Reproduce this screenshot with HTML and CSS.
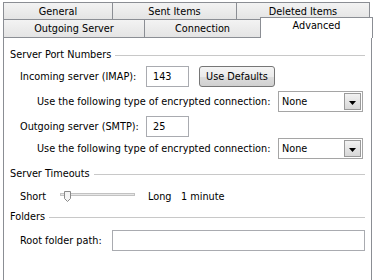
FILE: index.html
```html
<!DOCTYPE html>
<html>
<head>
<meta charset="utf-8">
<link rel="stylesheet" href="styles.css">
</head>
<body>
<div class="dialog">
  <div class="tabs">
    <div class="tabrow row1">
      <div class="tab t-general">General</div>
      <div class="tab t-sent">Sent Items</div>
      <div class="tab t-deleted last">Deleted Items</div>
    </div>
    <div class="tabrow row2">
      <div class="tab t-outgoing">Outgoing Server</div>
      <div class="tab t-connection">Connection</div>
      <div class="tab t-advanced selected">Advanced</div>
    </div>
  </div>
  <div class="panel">
    <div class="legend g1"><span>Server Port Numbers</span></div>
    <div class="row r-in">
      <span class="lbl lbl-port">Incoming server (IMAP):</span>
      <div class="textbox port">143</div>
      <div class="button">Use Defaults</div>
    </div>
    <div class="row r-enc1 indent">
      <span class="lbl lbl-enc">Use the following type of encrypted connection:</span>
      <div class="select"><span>None</span><span class="arrow"><svg width="7" height="4" viewBox="0 0 7 4"><path d="M0 0H7L3.5 4Z" fill="#000"/></svg></span></div>
    </div>
    <div class="row r-out">
      <span class="lbl lbl-port">Outgoing server (SMTP):</span>
      <div class="textbox port">25</div>
    </div>
    <div class="row r-enc2 indent">
      <span class="lbl lbl-enc">Use the following type of encrypted connection:</span>
      <div class="select"><span>None</span><span class="arrow"><svg width="7" height="4" viewBox="0 0 7 4"><path d="M0 0H7L3.5 4Z" fill="#000"/></svg></span></div>
    </div>
    <div class="legend g2"><span>Server Timeouts</span></div>
    <div class="row r-slider">
      <span class="lbl lbl-short">Short</span>
      <svg class="slider" width="76" height="12" viewBox="0 0 76 12">
        <rect x="0.5" y="2.5" width="74" height="2" fill="#e7e7e7" stroke="#c2c2c2"/>
        <path d="M4.5 0.5H10.5V7.5L7.5 10.5L4.5 7.5Z" fill="#f4f4f4" stroke="#8a8a8a"/>
      </svg>
      <span class="lbl lbl-long">Long</span>
      <span class="lbl">1 minute</span>
    </div>
    <div class="legend g3"><span>Folders</span></div>
    <div class="row r-root">
      <span class="lbl lbl-root">Root folder path:</span>
      <div class="textbox root"></div>
    </div>
  </div>
</div>
</body>
</html>
```

FILE: styles.css
```css
* { box-sizing: border-box; }
html, body { margin: 0; padding: 0; background: #fff; }
body {
  font-family: "DejaVu Sans Condensed", "Liberation Sans", sans-serif;
  font-size: 10.8px;
  color: #000;
  width: 374px;
  height: 280px;
  overflow: hidden;
}
.dialog { width: 374px; }
.tabs { padding: 2px 0 0 3px; }
.tabrow { display: flex; align-items: flex-start; }
.row1 { height: 17px; }
.row2 { height: 18px; }
.tab {
  border: 1px solid #8b8e94;
  border-right: none;
  border-bottom: none;
  background: linear-gradient(#f3f3f3, #e4e4e4);
  text-align: center;
  line-height: 17px;
  white-space: nowrap;
}
.row1 .tab { height: 17px; }
.row2 .tab { height: 18px; line-height: 17px; }
.tab.last { border-right: 1px solid #8b8e94; }
.t-general { width: 109px; }
.t-sent { width: 124px; }
.t-deleted { width: 134px; }
.t-outgoing { width: 141px; }
.t-connection { width: 116px; }
.row2 .t-advanced {
  width: 113px;
  height: 21px;
  margin-top: -2px;
  line-height: 16px;
  background: #fff;
  border-right: 1px solid #8b8e94;
  position: relative;
  z-index: 1;
}
.panel {
  margin-left: 3px;
  width: 369px;
  height: 243px;
  border: 1px solid #8b8e94;
  border-bottom: none;
  background: #fff;
  padding: 0 6px 0 6px;
}
.legend {
  display: flex;
  align-items: center;
  height: 14px;
  line-height: 14px;
}
.legend::after {
  content: "";
  flex: 1;
  height: 1px;
  background: #c8c8c8;
  margin-left: 4px;
}
.g1 { margin-top: 10px; }
.g2 { margin-top: 8px; }
.g3 { margin-top: 6px; }
.row {
  display: flex;
  align-items: center;
  padding-left: 10px;
}
.row.indent { padding-left: 27px; }
.lbl { white-space: nowrap; }
.r-in { margin-top: 4px; height: 21px; }
.r-enc1 { margin-top: 4px; height: 21px; }
.r-out { margin-top: 4px; height: 21px; }
.r-enc2 { margin-top: 1px; height: 21px; }
.r-slider { margin-top: 7px; height: 16px; }
.r-root { margin-top: 6px; height: 21px; }
.lbl-port { width: 126px; }
.lbl-enc { width: 241px; }
.lbl-root { width: 92px; }
.lbl-short { width: 40px; }
.lbl-long { margin-left: 12px; width: 33px; }
.textbox {
  border: 1px solid #a9abb0;
  background: #fff;
  height: 21px;
  line-height: 19px;
  padding-left: 6px;
}
.textbox.port { width: 43px; }
.textbox.root { flex: 1; }
.button {
  margin-left: 10px;
  width: 76px;
  height: 21px;
  border: 1px solid #767676;
  border-radius: 3px;
  background: linear-gradient(#f4f4f4 0%, #ebebeb 50%, #dddddd 51%, #d0d0d0 100%);
  text-align: center;
  line-height: 19px;
}
.select {
  width: 85px;
  height: 21px;
  border: 1px solid #a5a5a5;
  background: #fff;
  display: flex;
  align-items: center;
  justify-content: space-between;
  padding: 0 1px 0 3px;
}
.arrow {
  width: 17px;
  height: 17px;
  border: 1px solid #9a9a9a;
  background: linear-gradient(#f2f2f2, #d8d8d8);
  display: flex;
  align-items: center;
  justify-content: center;
}
.arrow svg { display: block; margin-top: 2px; }
.slider { display: block; margin-top: 1px; }
```
